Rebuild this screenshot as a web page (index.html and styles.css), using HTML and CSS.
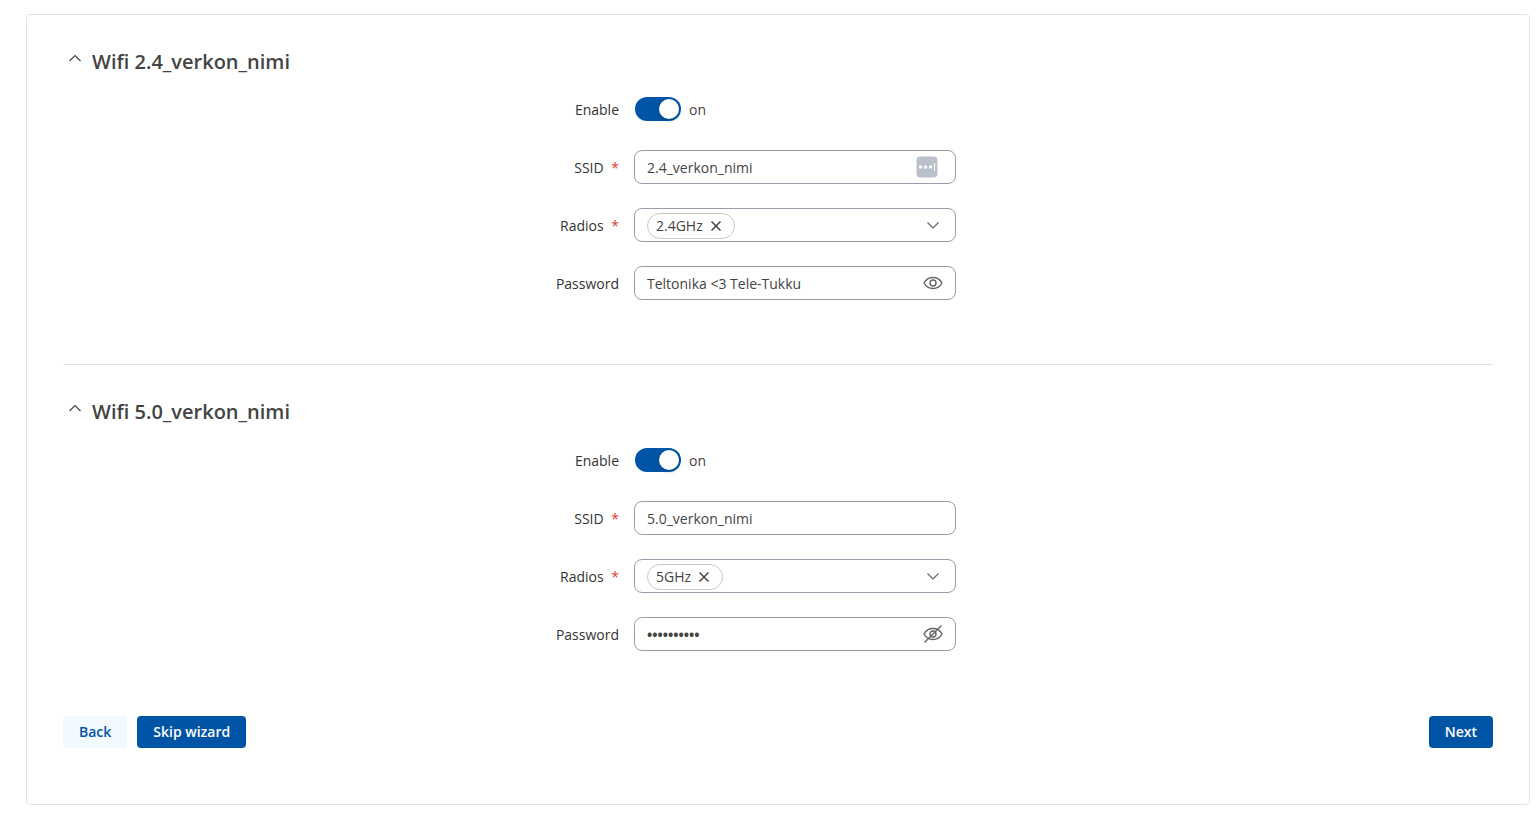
FILE: index.html
```html
<!DOCTYPE html>
<html lang="en">
<head>
<meta charset="utf-8">
<meta name="viewport" content="width=device-width, initial-scale=1">
<title>Setup wizard - Wifi</title>
<link rel="stylesheet" href="styles.css">
</head>
<body>
<form class="card">
  <section class="section">
    <h2 class="section-title">
      <button type="button" class="collapse" aria-expanded="true" aria-label="Collapse Wifi 2.4_verkon_nimi">
        <svg class="collapse-icon" viewBox="0 0 14 10" aria-hidden="true"><path d="M1.5 8 7 2.5 12.5 8"/></svg>
      </button>
      <span>Wifi 2.4_verkon_nimi</span>
    </h2>
    <div class="fields">
      <div class="row">
        <label class="label" for="enable-24">Enable</label>
        <div class="toggle"><input class="switch" type="checkbox" role="switch" id="enable-24" checked><span class="state">on</span></div>
      </div>
      <div class="row">
        <label class="label" for="ssid-24">SSID <span class="required">*</span></label>
        <div class="control">
          <input class="text" type="text" id="ssid-24" value="2.4_verkon_nimi">
          <button type="button" class="icon-button manager" aria-label="Password manager">
            <svg class="manager-icon" viewBox="0 0 22 22" aria-hidden="true"><rect x=".5" y=".5" width="21" height="21" rx="4" fill="#b9c0ca"/><circle cx="4.6" cy="11" r="1.7" fill="#fff"/><circle cx="9.6" cy="11" r="1.7" fill="#fff"/><circle cx="14.6" cy="11" r="1.7" fill="#fff"/><path d="M18.500 7v8" stroke="#fff" stroke-width="1"/></svg>
          </button>
        </div>
      </div>
      <div class="row">
        <label class="label" for="radios-24">Radios <span class="required">*</span></label>
        <div class="control">
          <span class="chip">2.4GHz
            <button type="button" class="icon-button" aria-label="Remove 2.4GHz"><svg class="remove-icon" viewBox="0 0 12 12" aria-hidden="true"><path d="m1.5 1.5 9 9M10.5 1.5l-9 9"/></svg></button>
          </span>
          <button type="button" class="icon-button open" id="radios-24" aria-haspopup="listbox" aria-label="Radios"><svg class="icon" viewBox="0 0 20 20" aria-hidden="true"><path d="M4.5 7.5 10 13l5.500-5.500"/></svg></button>
        </div>
      </div>
      <div class="row">
        <label class="label" for="password-24">Password</label>
        <div class="control">
          <input class="text" type="text" id="password-24" value="Teltonika &lt;3 Tele-Tukku">
          <button type="button" class="icon-button" aria-label="Hide password"><svg class="icon eye" viewBox="0 0 20 20" aria-hidden="true"><path d="M1 10C3 6.300 6.200 4.500 10 4.500S17 6.300 19 10c-2 3.700-5.200 5.500-9 5.500S3 13.700 1 10Z"/><circle cx="10" cy="10" r="3"/></svg></button>
        </div>
      </div>
    </div>
  </section>

  <section class="section">
    <h2 class="section-title">
      <button type="button" class="collapse" aria-expanded="true" aria-label="Collapse Wifi 5.0_verkon_nimi">
        <svg class="collapse-icon" viewBox="0 0 14 10" aria-hidden="true"><path d="M1.5 8 7 2.5 12.5 8"/></svg>
      </button>
      <span>Wifi 5.0_verkon_nimi</span>
    </h2>
    <div class="fields">
      <div class="row">
        <label class="label" for="enable-50">Enable</label>
        <div class="toggle"><input class="switch" type="checkbox" role="switch" id="enable-50" checked><span class="state">on</span></div>
      </div>
      <div class="row">
        <label class="label" for="ssid-50">SSID <span class="required">*</span></label>
        <div class="control">
          <input class="text" type="text" id="ssid-50" value="5.0_verkon_nimi">
        </div>
      </div>
      <div class="row">
        <label class="label" for="radios-50">Radios <span class="required">*</span></label>
        <div class="control">
          <span class="chip">5GHz
            <button type="button" class="icon-button" aria-label="Remove 5GHz"><svg class="remove-icon" viewBox="0 0 12 12" aria-hidden="true"><path d="m1.5 1.5 9 9M10.5 1.5l-9 9"/></svg></button>
          </span>
          <button type="button" class="icon-button open" id="radios-50" aria-haspopup="listbox" aria-label="Radios"><svg class="icon" viewBox="0 0 20 20" aria-hidden="true"><path d="M4.5 7.5 10 13l5.500-5.500"/></svg></button>
        </div>
      </div>
      <div class="row">
        <label class="label" for="password-50">Password</label>
        <div class="control">
          <input class="text masked" type="password" id="password-50" value="verkko5678">
          <button type="button" class="icon-button" aria-label="Show password"><svg class="icon eye" viewBox="0 0 20 20" aria-hidden="true"><path d="M1 10C3 6.300 6.200 4.500 10 4.500S17 6.300 19 10c-2 3.700-5.200 5.500-9 5.500S3 13.700 1 10Z"/><circle cx="10" cy="10" r="3"/><path d="M1.500 18.500 18.500 1.500"/></svg></button>
        </div>
      </div>
    </div>
  </section>

  <footer class="actions">
    <button type="button" class="button secondary">Back</button>
    <button type="button" class="button">Skip wizard</button>
    <button type="submit" class="button next">Next</button>
  </footer>
</form>
</body>
</html>
```

FILE: styles.css
```css
* {
  box-sizing: border-box;
}

body {
  margin: 14px 10px 8px 26px;
  background: #fff;
  color: #444;
  font: 14px/20px "Open Sans", "Noto Sans", sans-serif;
}

button,
input {
  font: inherit;
  color: inherit;
}

.card {
  padding: 32px 36px 56px;
  border: 1px solid #e3e3e3;
  border-radius: 4px;
}

.section + .section {
  border-top: 1px solid #e3e3e3;
  padding-top: 32px;
}

.section-title {
  display: flex;
  align-items: center;
  gap: 10px;
  margin: 0 0 15px;
  padding-left: 5px;
  font-size: 20px;
  line-height: 30px;
  font-weight: 600;
}

.section + .section .section-title {
  margin-bottom: 16px;
}

.collapse,
.icon-button {
  display: flex;
  flex: none;
  padding: 0;
  border: 0;
  background: none;
  cursor: pointer;
}

.collapse {
  padding-bottom: 8px;
}

.collapse-icon {
  width: 14px;
  height: 10px;
}

.collapse-icon,
.icon,
.remove-icon {
  fill: none;
  stroke: #444;
  stroke-width: 1.2;
}

.icon {
  width: 20px;
  height: 20px;
  stroke: #666;
}

.eye {
  stroke-width: 1.4;
}

.fields {
  display: grid;
  gap: 24px;
  padding-bottom: 64px;
}

.row {
  display: grid;
  grid-template-columns: 2fr 3fr;
  align-items: center;
}

.label {
  padding: 2px 16px 0 0;
  color: #333;
  text-align: right;
}

.required {
  margin-left: 4px;
  color: #e33b2e;
}

.toggle {
  display: flex;
  align-items: center;
  gap: 8px;
  height: 34px;
}

.state {
  padding-top: 2px;
}

.switch {
  appearance: none;
  display: flex;
  width: 46px;
  height: 24px;
  margin: 0;
  padding: 2px;
  border-radius: 12px;
  background: #9aa0a8;
}

.switch::before {
  content: "";
  width: 20px;
  height: 20px;
  border-radius: 50%;
  background: #fff;
  box-shadow: 0 2px 4px rgba(0, 35, 11, 0.2);
}

.switch:checked {
  justify-content: flex-end;
  background: #0054a6;
}

.control {
  display: flex;
  align-items: center;
  width: 100%;
  max-width: 322px;
  height: 34px;
  margin-left: -1px;
  padding: 0 12px;
  border: 1px solid #9c9ba9;
  border-radius: 8px;
}

.text {
  flex: 1;
  min-width: 0;
  padding: 2px 0 0;
  border: 0;
  outline: 0;
  background: none;
}

.masked {
  font-weight: 700;
}

.manager {
  margin-right: 5px;
}

.manager-icon {
  width: 22px;
  height: 22px;
}

.chip {
  display: flex;
  align-items: center;
  gap: 7px;
  height: 26px;
  margin-top: 2px;
  padding: 0 12px 0 8px;
  border: 1px solid #c8c8c8;
  border-radius: 13px;
}

.remove-icon {
  width: 12px;
  height: 12px;
  stroke-width: 1.5;
}

.open {
  margin-left: auto;
}

.actions {
  display: flex;
  gap: 10px;
  padding-top: 1px;
}

.button {
  height: 32px;
  padding: 0 16px;
  border: 0;
  border-radius: 4px;
  background: #0054a6;
  color: #fff;
  font-weight: 600;
  cursor: pointer;
}

.secondary {
  background: #f2f9ff;
  color: #0054a6;
}

.next {
  margin-left: auto;
}
```
